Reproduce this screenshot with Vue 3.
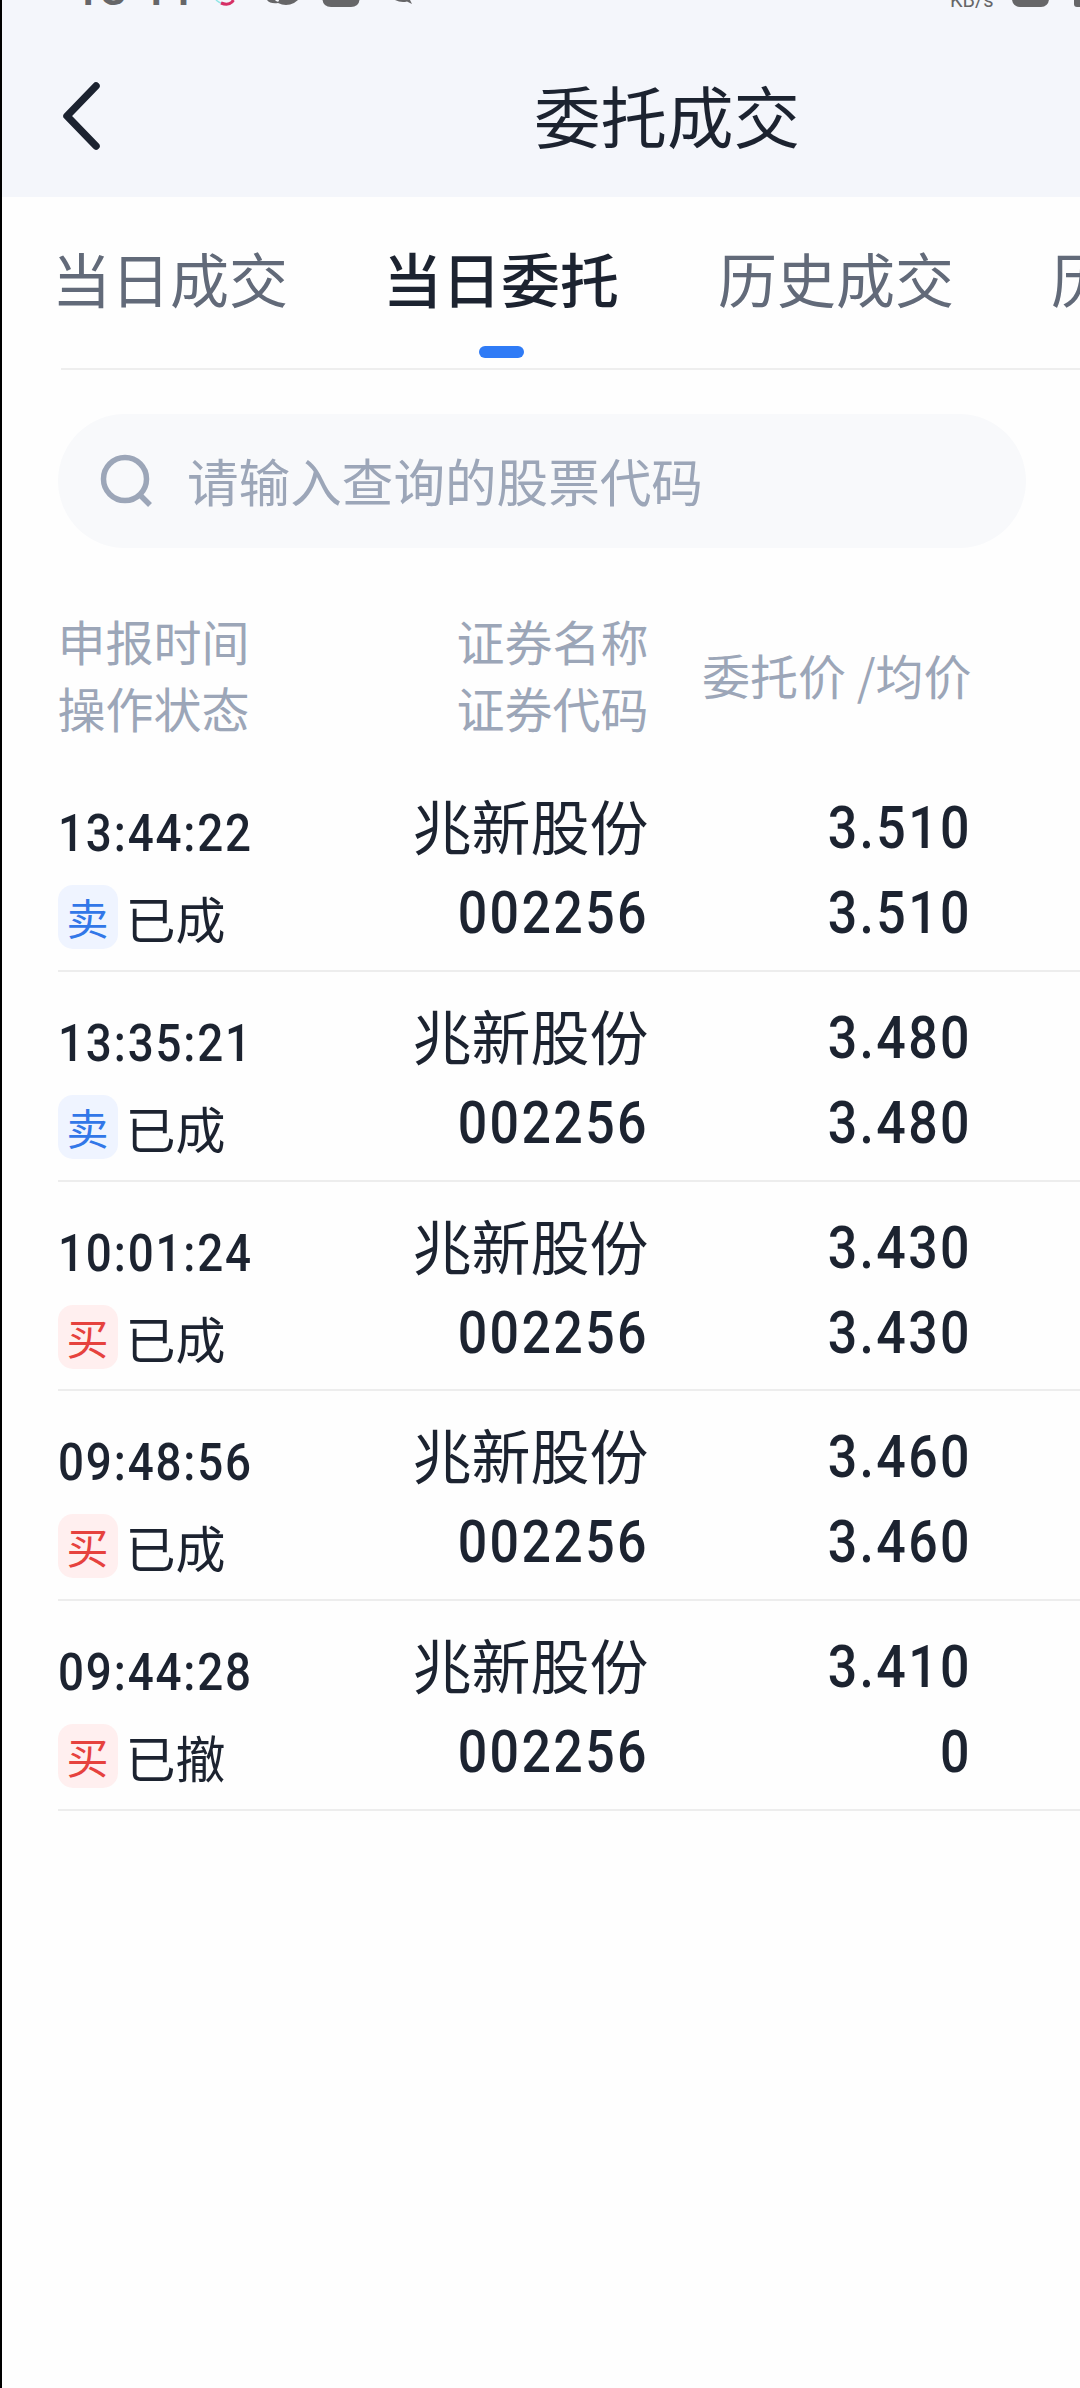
<template>
  <div class="page">
    <div class="status-bar">
      <span class="clock">13<i class="colon">:</i>44</span>
      <svg class="status-icons" width="210" height="8" viewBox="210 0 210 8">
        <path d="M216 0 Q219 3 224 4" fill="none" stroke="#8fe6e6" stroke-width="1.5" />
        <path d="M221 3 Q228 6 232 2 L233.5 0" fill="none" stroke="#d63066" stroke-width="3" />
        <path d="M267 0 Q270 4 278 3 Q286 7 294 3 L298 0 H279 Q279 3 276 1 L275 0 Z" fill="#666668" />
        <path d="M322.5 0 H359.500 Q358.500 7 351 7 H331 Q323.500 7 322.500 0 Z" fill="#666668" />
        <path d="M395 0 Q401 3 407 1.500 L412 4 L410 0 Z" fill="#666668" />
      </svg>
      <span class="speed">KB/s</span>
      <span class="badge"></span>
      <span class="battery"></span>
    </div>

    <header class="header">
      <svg class="back" width="44" height="76" viewBox="0 0 44 76">
        <path d="M36 8 L7 38 L36 68" />
      </svg>
      <h1 class="title">委托成交</h1>
    </header>

    <nav class="tabs">
      <span
        v-for="tab in tabs"
        :key="tab"
        class="tab"
        :class="{ active: tab === activeTab }"
        @click="activeTab = tab"
      >
        {{ tab }}
      </span>
    </nav>

    <div class="search">
      <svg class="search-icon" width="54" height="56" viewBox="0 0 54 56">
        <circle cx="25" cy="26" r="21.5" />
        <path d="M40 42 L50 52" />
      </svg>
      <span class="placeholder">请输入查询的股票代码</span>
    </div>

    <div class="grid table-head">
      <div>申报时间<br />操作状态</div>
      <div class="right">证券名称<br />证券代码</div>
      <div class="right">委托价 /均价</div>
    </div>

    <div v-for="order in orders" :key="order.time" class="grid order">
      <div>
        <div class="time num">{{ order.time }}</div>
        <div class="state">
          <span class="tag" :class="order.side">
            {{ order.side === "sell" ? "卖" : "买" }}
          </span>
          <span>{{ order.state }}</span>
        </div>
      </div>
      <div class="right">
        <div class="name">兆新股份</div>
        <div class="value num">002256</div>
      </div>
      <div class="right">
        <div class="value num">{{ order.price }}</div>
        <div class="value num">{{ order.average }}</div>
      </div>
    </div>
  </div>
</template>

<script setup>
import { ref } from "vue";

const tabs = ["当日成交", "当日委托", "历史成交", "历史委托"];
const activeTab = ref("当日委托");

const orders = [
  { time: "13:44:22", side: "sell", state: "已成", price: "3.510", average: "3.510" },
  { time: "13:35:21", side: "sell", state: "已成", price: "3.480", average: "3.480" },
  { time: "10:01:24", side: "buy", state: "已成", price: "3.430", average: "3.430" },
  { time: "09:48:56", side: "buy", state: "已成", price: "3.460", average: "3.460" },
  { time: "09:44:28", side: "buy", state: "已撤", price: "3.410", average: "0" },
];
</script>

<style>
body {
  background: #fefefe;
}
</style>

<style scoped>
.page {
  box-sizing: border-box;
  width: 1080px;
  height: 2388px;
  overflow: hidden;
  border-left: 2px solid #000;
  background: #fefefe;
  color: #1c2330;
  font-family: "Noto Sans CJK SC", sans-serif;
}

.status-bar {
  display: flex;
  align-items: flex-end;
  height: 8px;
  overflow: hidden;
  background: #f4f6fb;
  color: #666668;
}

.status-bar > * {
  flex: none;
}

.clock {
  width: 137px;
  margin: 0 0 -5px 71px;
  font: 500 48px/48px Roboto, sans-serif;
}

.colon {
  position: relative;
  top: -8px;
  margin-right: -3px;
  font-style: normal;
}

.speed {
  width: 62px;
  margin: 0 0 -2px 530px;
  font: 20px/20px Roboto, sans-serif;
}

.badge,
.battery {
  width: 37px;
  height: 30px;
  margin-bottom: 1px;
  border-radius: 8px;
  background: #666668;
}

.battery {
  margin-left: 25px;
  border-radius: 3px;
}

.header {
  display: flex;
  align-items: center;
  height: 189px;
  background: #f4f6fb;
}

.back {
  margin-left: 58px;
  margin-top: 26px;
  fill: none;
  stroke: #1c2330;
  stroke-width: 7.5;
  stroke-linecap: round;
  stroke-linejoin: round;
}

.title {
  margin: 22px 0 0 430px;
  font-size: 66.5px;
  line-height: 80px;
  font-weight: 400;
}

.tabs {
  display: flex;
  gap: 97px;
  height: 171px;
  margin-left: 59px;
  border-bottom: 2px solid #eee;
}

.tab {
  position: relative;
  flex: none;
  left: -9px;
  padding-top: 41px;
  font-size: 59px;
  line-height: 80px;
  color: #626a79;
}

.tab.active {
  left: -11px;
  font-weight: 500;
  color: #1c2330;
}

.tab.active::after {
  content: "";
  position: absolute;
  left: 96px;
  top: 149px;
  width: 45px;
  height: 12px;
  border-radius: 6px;
  background: #2f7bf6;
}

.search {
  display: flex;
  align-items: center;
  gap: 33px;
  box-sizing: border-box;
  width: 968px;
  height: 134px;
  margin: 44px 0 0 56px;
  padding-left: 42px;
  border-radius: 67px;
  background: #f8f9fb;
  color: #9ca6b8;
  font-size: 51.6px;
}

.search-icon {
  fill: none;
  stroke: #9ca6b8;
  stroke-width: 5.5;
}

.placeholder {
  padding-bottom: 3px;
}

.grid {
  display: grid;
  grid-template-columns: 240px 351px 323px;
  margin-left: 55.5px;
}

.right {
  text-align: right;
}

.table-head {
  align-items: center;
  margin-top: 59px;
  margin-bottom: 21px;
  font-size: 48px;
  line-height: 67px;
  color: #9ca6b8;
}

.order {
  box-sizing: border-box;
  height: 209.75px;
  border-bottom: 2px solid #ededed;
}

/* Roboto narrowed to the proportions of a DIN numeral */
.num {
  font-family: Roboto, sans-serif;
  font-weight: 500;
  transform: scaleX(0.88);
  transform-origin: right;
}

.time {
  padding-top: 42px;
  font-size: 52px;
  line-height: 60px;
  letter-spacing: 2.1px;
  transform-origin: left;
}

.state {
  display: flex;
  align-items: center;
  gap: 8px;
  margin-top: 18px;
  font-size: 50px;
  line-height: 70px;
}

.tag {
  width: 60px;
  height: 64px;
  border-radius: 15px;
  font-size: 42px;
  line-height: 64px;
  text-align: center;
}

.tag.sell {
  background: #eff4ff;
  color: #3277e8;
}

.tag.buy {
  background: #ffefef;
  color: #e6423e;
}

.right {
  padding-top: 23px;
}

.table-head .right {
  padding-top: 0;
}

.name {
  font-size: 59px;
  line-height: 80px;
  padding-bottom: 5px;
}

.value {
  font-size: 59px;
  line-height: 85px;
  letter-spacing: 2.7px;
}
</style>
